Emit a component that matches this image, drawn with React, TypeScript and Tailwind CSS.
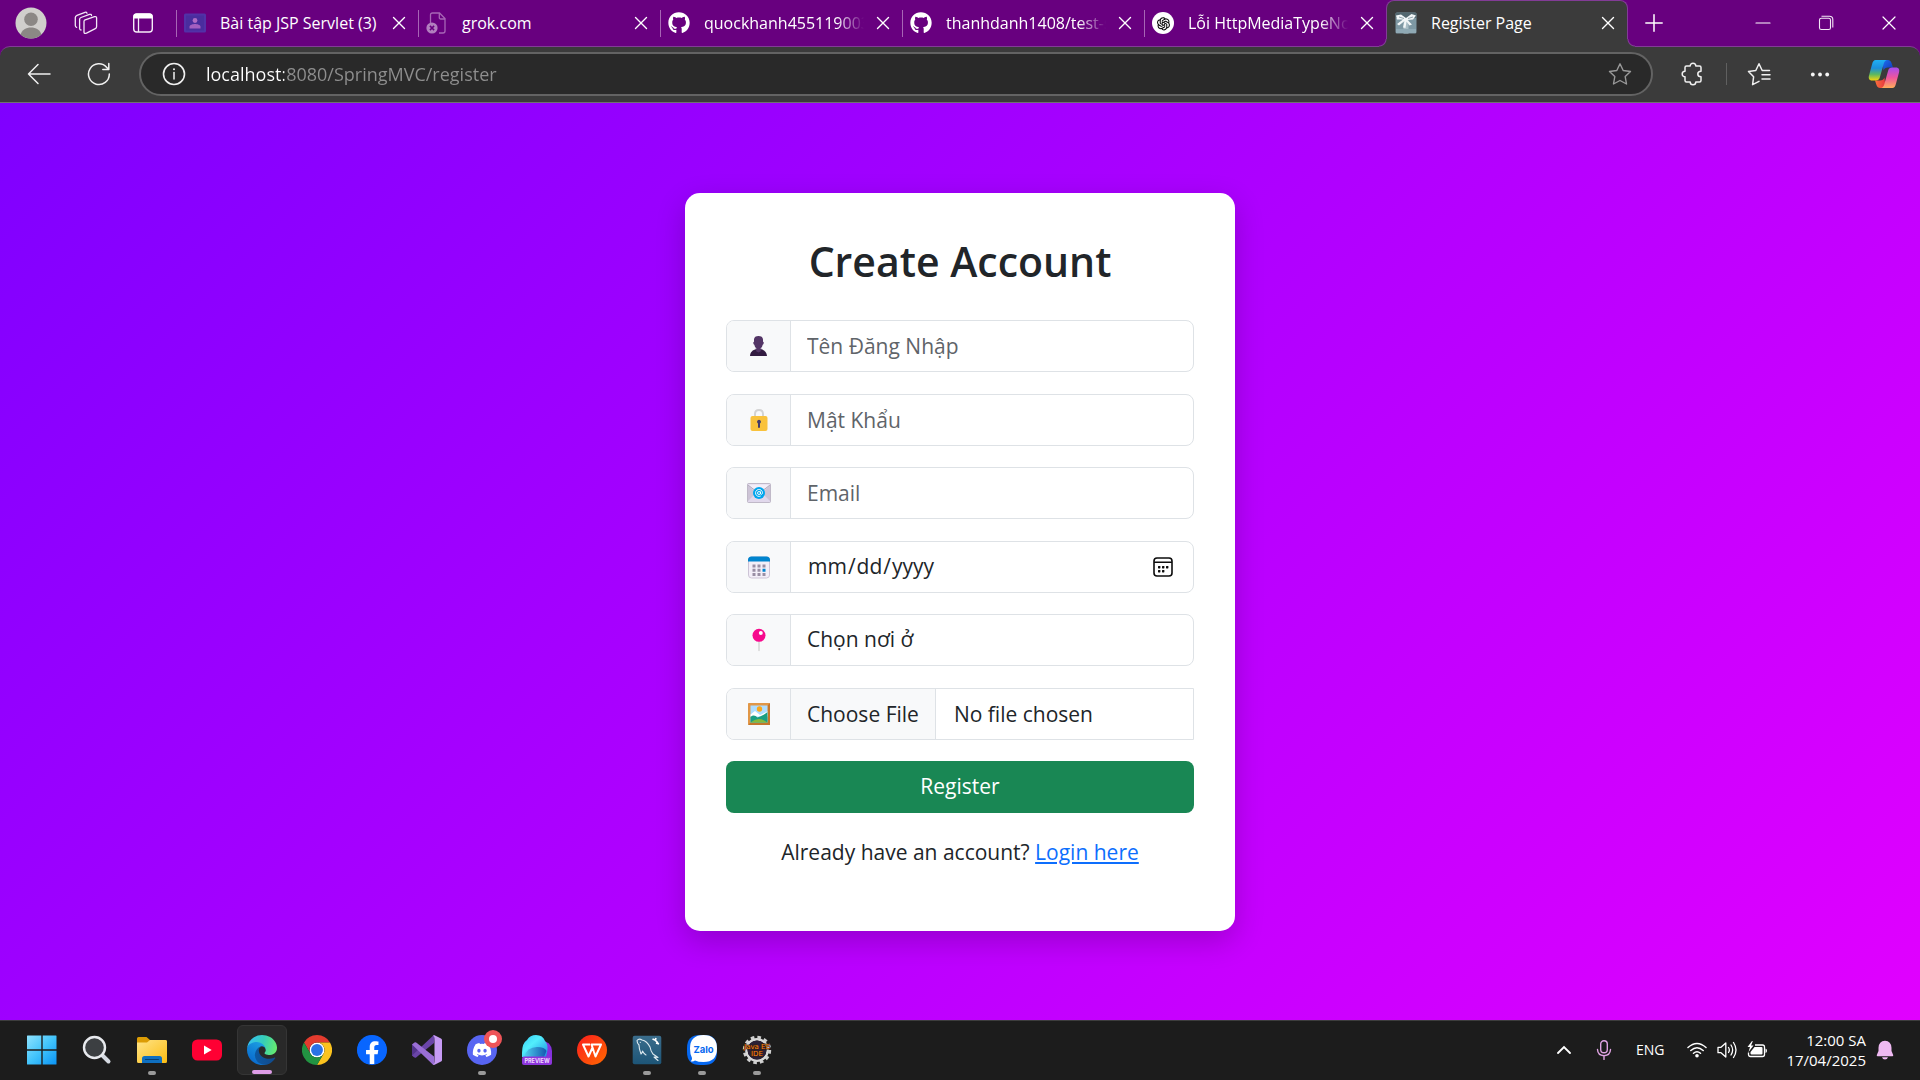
import React from "react";
import { X, Minus, Plus } from "lucide-react";
import { FaGithub, FaDiscord, FaFacebook } from "react-icons/fa";
import { AiOutlineOpenAI } from "react-icons/ai";

/* ---------- browser icons ---------- */

const Avatar = () => (
  <svg viewBox="0 0 32 32" className="size-8" aria-hidden="true">
    <circle cx="16" cy="16" r="15.5" fill="#d0cfcc" />
    <circle cx="16" cy="12.2" r="6.8" fill="#8b8885" />
    <path d="M5.5 27.4C7 23 11 20.4 16 20.4S25 23 26.500 27.400A15.500 15.500 0 0 1 5.500 27.400Z" fill="#8b8885" />
  </svg>
);

const Workspaces = () => (
  <svg viewBox="0 0 24 24" className="size-6" fill="none" stroke="#f3e8f6" strokeWidth="1.3" strokeLinejoin="round" strokeLinecap="round" aria-hidden="true">
    <path d="M10.500 9.200 20.500 5.700Q22.600 5.200 22.600 7V15.500Q22.600 17 21.300 17.600L12.500 22.200Q10 23 10 21V10.500Q10 9.500 10.500 9.200Z" />
    <path d="M17.500 4.500Q17.300 2.900 15.500 3.400L7 6.500Q5.600 7 5.600 8.300V17.500Q5.700 18.900 7 19" />
    <path d="M13 2.200Q12.500.9 11 1.300L3 4.300Q1.300 5 1.300 6.500V14.500Q1.300 16 2.600 16.300" />
  </svg>
);

const TabActions = () => (
  <svg viewBox="0 0 22 22" className="size-[22px]" fill="none" aria-hidden="true">
    <rect x="1.700" y="2" width="18.600" height="18" rx="3" stroke="#f6ecf8" strokeWidth="1.400" />
    <path d="M1.500 4.500Q1.500 1.500 4.500 1.500h13Q20.500 1.500 20.500 4.500V6.500H1.500Z" fill="#fff" />
    <path d="M6.500 6v14" stroke="#f6ecf8" strokeWidth="1.300" />
  </svg>
);

const ClassroomIcon = () => (
  <svg viewBox="0 0 22 20" className="h-5 w-[22px]" aria-hidden="true">
    <rect width="22" height="19" y=".5" rx="1.500" fill="#5231a8" />
    <rect x="2" y="2.500" width="18" height="15" fill="#4a2d9e" />
    <circle cx="11" cy="7.500" r="2.400" fill="#b06bc4" />
    <path d="M5.500 15.500v-1.700c0-2 3.500-2.800 5.500-2.800s5.500.8 5.500 2.800v1.700z" fill="#a45fc0" />
  </svg>
);

const BrokenPageIcon = () => (
  <svg viewBox="0 0 22 22" className="size-[22px]" fill="none" aria-hidden="true">
    <path d="M4.500 11V3Q4.500 1 6.500 1H13.500L19 6.500V19Q19 21 17 21H13M13.300 1V5.500Q13.300 7 14.800 7H19" stroke="#a766b6" strokeWidth="1.300" />
    <circle cx="6" cy="16" r="5.600" fill="#b27fbf" />
    <path d="m3.900 13.900 4.200 4.200m0-4.200-4.200 4.200" stroke="#68007f" strokeWidth="1.500" />
  </svg>
);

const GithubIcon = () => <FaGithub className="size-[22px] text-white" aria-hidden="true" />;

const OpenAiIcon = () => (
  <span className="flex size-[22px] items-center justify-center rounded-full bg-white">
    <AiOutlineOpenAI className="size-[17px] text-black" aria-hidden="true" />
  </span>
);

const GiftIcon = () => (
  <svg viewBox="0 0 22 22" className="size-[22px]" aria-hidden="true">
    <rect x=".5" y=".5" width="21" height="21" rx="1.500" fill="#7e98a3" />
    <path d="M.5 2q0-1.500 1.500-1.500h18q1.500 0 1.500 1.500v4H.5z" fill="#53676f" />
    <path d="M8.500 8h5v13.500h-5z" fill="#a9bec6" />
    <path d="M1 17h20v4H1z" fill="#8fa9b4" />
    <path d="M1 3.500 6 2.500 11 6 16.500 2 21 3.500 18 7.500 12.500 8 17 12.500 14.500 13.500 11.500 9.500 10.500 16 8 15.500 9.500 9 4 13.500 2 12 8 7.500 2 7.500Z" fill="#f2f6f7" />
    <path d="m4 5 5 1.500M18 5l-5 1.500" stroke="#93a5ad" strokeWidth="1" />
  </svg>
);

const BackArrow = () => (
  <svg viewBox="0 0 24 24" className="size-6" fill="none" stroke="#f0f0f0" strokeWidth="1.500" strokeLinecap="round" strokeLinejoin="round" aria-hidden="true">
    <path d="M23 12H1.500M11 2.500 1.500 12l9.500 9.500" />
  </svg>
);

const Reload = () => (
  <svg viewBox="0 0 24 24" className="size-6" fill="none" stroke="#f0f0f0" strokeWidth="1.500" strokeLinecap="round" strokeLinejoin="round" aria-hidden="true">
    <path d="M22.300 12A10.400 10.400 0 1 1 19.800 5.400L21.500 7.300M21.800 1.500V7.500H15.800" />
  </svg>
);

const Info = () => (
  <svg viewBox="0 0 24 24" className="size-6 shrink-0" fill="none" stroke="#f0f0f0" aria-hidden="true">
    <circle cx="12" cy="12" r="10.500" strokeWidth="1.600" />
    <path d="M12 10.500v6.500" strokeWidth="1.500" strokeLinecap="round" />
    <circle cx="12" cy="7.300" r="1" fill="#f0f0f0" stroke="none" />
  </svg>
);

const Star = () => (
  <svg viewBox="0 0 24 24" className="size-6" fill="none" stroke="#9a9a9a" strokeWidth="1.400" strokeLinejoin="round" aria-hidden="true">
    <path d="m12 1.800 3.200 6.700 7.300 1-5.300 5.100 1.300 7.400L12 18.500 5.500 22l1.300-7.400L1.500 9.500l7.300-1z" />
  </svg>
);

const Puzzle = () => (
  <svg viewBox="0 0 24 24" className="size-6" fill="none" stroke="#f0f0f0" strokeWidth="1.500" strokeLinejoin="round" aria-hidden="true">
    <path d="M4 5.500Q4 4 5.500 4H9.200C9.200 2.300 10.300 1.200 12 1.200S14.800 2.300 14.800 4H18.500Q20 4 20 5.500V9.200C18.300 9.200 16.800 10.300 16.800 12S18.300 14.800 20 14.800V18.500Q20 20 18.500 20H14.800C14.800 21.700 13.700 22.800 12 22.800S9.200 21.700 9.200 20H5.500Q4 20 4 18.500V14.800C2.300 14.800 1.200 13.700 1.200 12S2.300 9.200 4 9.200Z" />
  </svg>
);

const Favorites = () => (
  <svg viewBox="0 0 24 24" className="size-6" fill="none" stroke="#f0f0f0" strokeWidth="1.500" strokeLinejoin="round" strokeLinecap="round" aria-hidden="true">
    <path d="M12 19.300 5.600 22.600 6.600 14.800 1.500 9.400 8.800 8.500 12 1.800l3.200 6.700H22.500M15 12.800h8M15 17h8" />
  </svg>
);

const Dots = () => (
  <svg viewBox="0 0 24 24" className="size-6" fill="#f5f5f5" aria-hidden="true">
    <circle cx="4.800" cy="12.500" r="1.900" />
    <circle cx="12" cy="12.500" r="1.900" />
    <circle cx="19.200" cy="12.500" r="1.900" />
  </svg>
);

const Copilot = () => (
  <svg viewBox="0 0 32 30" className="h-[30px] w-8" aria-hidden="true">
    <defs>
      <linearGradient id="cpA" x1="0" y1="0" x2="0" y2="1">
        <stop offset="0" stopColor="#1fb0f5" />
        <stop offset=".4" stopColor="#1c8fdc" />
        <stop offset=".7" stopColor="#5cb861" />
        <stop offset="1" stopColor="#f5d50c" />
      </linearGradient>
      <linearGradient id="cpB" x1="0" y1="0" x2="0" y2="1">
        <stop offset="0" stopColor="#a64cf0" />
        <stop offset=".5" stopColor="#f0569b" />
        <stop offset="1" stopColor="#ffad5a" />
      </linearGradient>
      <linearGradient id="cpC" x1="0" y1="0" x2="1" y2="1">
        <stop offset="0" stopColor="#1d6ff0" />
        <stop offset="1" stopColor="#1236b5" />
      </linearGradient>
      <linearGradient id="cpD" x1="0" y1="0" x2="1" y2="0">
        <stop offset="0" stopColor="#f9713b" />
        <stop offset="1" stopColor="#e8363f" />
      </linearGradient>
    </defs>
    <path d="M14.500 1h5.200c2.300 0 3.300 1.200 4 3.500L25 8.500H20c-2.500 0-3.700 1-4.500 3z" fill="url(#cpC)" />
    <path d="M17.500 29h-5.200c-2.300 0-3.300-1.200-4-3.500L7 21.500H12c2.500 0 3.700-1 4.500-3z" fill="url(#cpD)" />
    <path d="M7.800 1H19c-2 .5-2.800 2-3.500 4.500l-3.700 13c-.7 2.200-1.800 3-4 3H4c-2.800 0-3.800-2.300-3-5L4 5.500C4.700 2.500 5.700 1 7.800 1Z" fill="url(#cpA)" />
    <path d="M24.200 29H13c2-.5 2.800-2 3.500-4.500l3.700-13c.7-2.200 1.800-3 4-3H28c2.800 0 3.800 2.300 3 5L28 24.500c-.7 3-1.700 4.500-3.800 4.500Z" fill="url(#cpB)" />
  </svg>
);

const RestoreIcon = () => (
  <svg viewBox="0 0 16 16" className="size-4" fill="none" stroke="#f3e8f6" strokeWidth="1.100" aria-hidden="true">
    <rect x="1.500" y="3.300" width="11" height="11.200" rx="1.800" />
    <path d="M3.500 1.300H11.500Q14.800 1.300 14.800 4.500V12.500" />
  </svg>
);

/* ---------- form icons ---------- */

const PersonIcon = () => (
  <svg viewBox="0 0 24 24" className="size-6" aria-hidden="true">
    <path d="M3 22c.3-4 2.500-6 6.500-7h4c4 1 6.200 3 6.500 7z" fill="#321b41" />
    <path d="M8.500 14.500h6L13.500 17.500 11.500 18.500 9.500 17.500Z" fill="#533566" />
    <path d="M7 5.500C7 3 9 2 11.500 2S16 3 16 5.500v2.300q1 .3.700 1.500-.3 1.300-1 1.500C15 13.500 13.500 15.500 11.500 15.500S8 13.500 7.300 10.800Q6.500 10.500 6.300 9.300 6 8 7 7.800Z" fill="#533566" />
  </svg>
);

const LockIcon = () => (
  <svg viewBox="0 0 24 24" className="size-6" aria-hidden="true">
    <path d="M8 9V6q0-4 4-4t4 4v3" fill="none" stroke="#d3d3d3" strokeWidth="2" />
    <rect x="3.500" y="8" width="17" height="15" rx="2" fill="#f9c23c" />
    <path d="M12 11.800a2 2 0 0 1 1 3.700V19q0 1-1 1t-1-1V15.500a2 2 0 0 1 1-3.700z" fill="#433b6b" />
  </svg>
);

const MailIcon = () => (
  <svg viewBox="0 0 24 24" className="size-6" aria-hidden="true">
    <rect x=".5" y="2.500" width="23" height="19" rx="1" fill="#e1d8ec" />
    <path d="M1 4v16l8-8zM23 4v16l-8-8z" fill="#cdc4d6" />
    <path d="M1 3.500h22L12 12z" fill="#f3eef8" />
    <path d="m1 4 11 8.500L23 4" fill="none" stroke="#b4acbc" strokeWidth="1" />
    <rect x=".5" y="2.500" width="23" height="19" rx="1" fill="none" stroke="#b4acbc" strokeWidth=".8" />
    <circle cx="12" cy="12" r="6" fill="#00a6ed" />
    <circle cx="12" cy="12" r="1.500" fill="none" stroke="#fff" strokeWidth=".9" />
    <path d="M13.500 10.500v2q.2 1 1.200.8.900-.4.800-1.600A3.500 3.500 0 1 0 13.700 15" fill="none" stroke="#fff" strokeWidth=".9" />
  </svg>
);

const CalendarIcon = () => (
  <svg viewBox="0 0 24 24" className="size-6" aria-hidden="true">
    <rect x="1.500" y="2" width="21" height="21" rx="3" fill="#f3eef8" stroke="#cdc4d6" />
    <path d="M1 6.500V5q0-3.500 3.500-3.500h15Q23 1.500 23 5v1.500z" fill="#0084ce" />
    <g fill="#998ea4">
      <path d="M5.500 9.500h3v3h-3zM10.500 9.500h3v3h-3zM15.500 9.500h3v3h-3zM5.500 13.800h3v3h-3zM10.500 13.800h3v3h-3zM5.500 18h3v3h-3zM10.500 18h3v3h-3zM15.500 18h3v3h-3z" />
    </g>
    <path d="M15.500 13.800h3v3h-3z" fill="#0084ce" />
  </svg>
);

const PinIcon = () => (
  <svg viewBox="0 0 24 24" className="size-6" aria-hidden="true">
    <path d="M12 13v9.500" stroke="#d3d3d3" strokeWidth="1.400" strokeLinecap="round" />
    <circle cx="12" cy="7.300" r="6.500" fill="#f70a8d" />
    <circle cx="13.800" cy="5" r="2" fill="#fff" />
  </svg>
);

const PictureIcon = () => (
  <svg viewBox="0 0 24 24" className="size-6" aria-hidden="true">
    <rect x="1" y="1" width="22" height="22" rx=".8" fill="#e19747" />
    <path d="M23 1v22H1l2.500-2.500h17v-17z" fill="#c3762c" />
    <rect x="3.500" y="3.500" width="17" height="17" fill="#aeddff" />
    <circle cx="12.500" cy="7" r="2.700" fill="#f9a71c" />
    <path d="M3.500 12.500 8 9l5 4 7.500-3.500v5h-17z" fill="#fff" />
    <path d="M3.500 15q3.500-3 7 .5Q15 14.500 20.500 10v10.500h-17z" fill="#1a9f83" />
    <path d="M3.500 20.500q8-7 17 0z" fill="#86b93c" />
  </svg>
);

const PickerIcon = () => (
  <svg viewBox="0 0 20 20" className="pointer-events-none absolute right-5 size-5" fill="none" stroke="#0c0c0c" aria-hidden="true">
    <rect x="1" y="1" width="18" height="18" rx="3" strokeWidth="1.600" />
    <path d="M1 5.200h18" strokeWidth="1.500" />
    <g fill="#0c0c0c" stroke="none">
      <rect x="5" y="9" width="2.400" height="2.400" rx=".6" />
      <rect x="9" y="9" width="2.400" height="2.400" rx=".6" />
      <rect x="13" y="9" width="2.400" height="2.400" rx=".6" />
      <rect x="5" y="13" width="2.400" height="2.400" rx=".6" />
      <rect x="9" y="13" width="2.400" height="2.400" rx=".6" />
    </g>
  </svg>
);

/* ---------- taskbar icons ---------- */

const WindowsLogo = () => (
  <svg viewBox="0 0 30 30" className="size-[30px]" aria-hidden="true">
    <defs>
      <linearGradient id="win" x1="0" y1="0" x2="1" y2="1">
        <stop offset="0" stopColor="#8fe3ff" />
        <stop offset=".5" stopColor="#42c4fb" />
        <stop offset="1" stopColor="#0a93f5" />
      </linearGradient>
    </defs>
    <path d="M0 1Q0 .5.500.5H14.300V14.300H0ZM15.700.5H29Q29.500.5 29.500 1V14.300H15.700ZM0 15.700H14.300V29.500H.5Q0 29.500 0 29ZM15.700 15.700H29.500V29Q29.500 29.500 29 29.500H15.700Z" fill="url(#win)" />
  </svg>
);

const SearchLogo = () => (
  <svg viewBox="0 0 30 30" className="size-[30px]" aria-hidden="true">
    <path d="m19 19 7.500 7.500" stroke="#d5dae2" strokeWidth="4" strokeLinecap="round" />
    <circle cx="12.500" cy="12.500" r="10.500" fill="#3c3f42" stroke="#e8eaee" strokeWidth="2.400" />
  </svg>
);

const FolderLogo = () => (
  <svg viewBox="0 0 30 30" className="size-[30px]" aria-hidden="true">
    <defs>
      <linearGradient id="fold" x1="0" y1="0" x2="1" y2="1">
        <stop offset="0" stopColor="#ffe488" />
        <stop offset="1" stopColor="#fbbc12" />
      </linearGradient>
    </defs>
    <path d="M0 8V3.500Q0 2 1.500 2H9.500L13 5H28Q30 5 30 7V12H0Z" fill="#dc9c05" />
    <path d="M0 7.500H10L13 5H28.500Q30 5 30 6.500V26.500Q30 28 28.500 28H1.500Q0 28 0 26.500Z" fill="url(#fold)" />
    <path d="M5 28V23.500Q5 21 7.500 21h15Q25 21 25 23.500V28Z" fill="#0f6fc0" />
    <path d="M8.500 24.500h13" stroke="#063f73" strokeWidth="1.200" strokeLinecap="round" />
  </svg>
);

const YoutubeLogo = () => (
  <svg viewBox="0 0 30 30" className="size-[30px]" aria-hidden="true">
    <rect y="4.500" width="30" height="21" rx="5.500" fill="#ff0033" />
    <path d="m12 10.500 7.700 4.500-7.700 4.500z" fill="#fff" />
  </svg>
);

const EdgeLogo = () => (
  <svg viewBox="0 0 256 256" className="size-[30px]" aria-hidden="true">
    <defs>
      <linearGradient id="edA" x1="63" y1="178" x2="241" y2="178" gradientUnits="userSpaceOnUse">
        <stop offset="0" stopColor="#0c59a4" />
        <stop offset="1" stopColor="#114a8b" />
      </linearGradient>
      <linearGradient id="edB" x1="140" y1="80" x2="45" y2="230" gradientUnits="userSpaceOnUse">
        <stop offset="0" stopColor="#1b9de2" />
        <stop offset=".5" stopColor="#1283d8" />
        <stop offset="1" stopColor="#0a6cce" />
      </linearGradient>
      <linearGradient id="edC" x1="10" y1="60" x2="250" y2="120" gradientUnits="userSpaceOnUse">
        <stop offset="0" stopColor="#35c1f1" />
        <stop offset=".5" stopColor="#36cdb8" />
        <stop offset="1" stopColor="#66eb6e" />
      </linearGradient>
    </defs>
    <path d="M235.680 192.460a93.730 93.730 0 01-10.540 4.710 101.870 101.870 0 01-35.900 6.460c-47.320 0-88.540-32.550-88.540-74.320A31.480 31.480 0 01117.130 102c-42.800 1.800-53.800 46.400-53.800 72.530 0 73.880 68.090 81.370 82.760 81.370 7.910 0 19.840-2.300 27-4.560l1.310-.44a128.340 128.340 0 0066.600-52.800 4 4 0 00-5.320-5.640z" fill="url(#edA)" />
    <path d="M105.730 241.420a79.200 79.200 0 01-22.740-21.340 80.720 80.720 0 0129.530-120c3.120-1.470 8.450-4.130 15.540-4a32.350 32.350 0 0125.690 13 31.880 31.880 0 016.360 18.660c0-.21 24.460-79.600-80-79.600-43.900 0-80 41.660-80 78.210a130.150 130.150 0 0012.110 56 128 128 0 00156.380 67.110 75.550 75.550 0 01-62.780-8z" fill="url(#edB)" />
    <path d="M152.330 149c-.81 1.050-3.300 2.500-3.300 5.660 0 2.610 1.700 5.120 4.720 7.230 14.380 10 41.490 8.680 41.560 8.680a59.560 59.560 0 0030.270-8.350 61.380 61.380 0 0030.430-52.880c.26-22.410-8-37.310-11.340-43.910C223.480 23.980 177.740.14 128 .14a128 128 0 00-128 126.200c.48-36.540 36.800-66.050 80-66.050 3.500 0 23.460.34 42 10.070 16.340 8.580 24.900 18.940 30.850 29.210 6.180 10.670 7.280 24.150 7.280 29.520s-2.740 13.330-7.800 19.910z" fill="url(#edC)" />
  </svg>
);

const ChromeLogo = () => (
  <svg viewBox="0 0 48 48" className="size-[30px]" aria-hidden="true">
    <circle cx="24" cy="24" r="12" fill="#fff" />
    <path d="M24 12H44.781a23.994 23.994 0 0 0-41.564.003L13.608 30l.009-.002A11.985 11.985 0 0 1 24 12Z" fill="#e33b2e" />
    <path d="M34.391 30.003 24 48A23.994 23.994 0 0 0 44.780 12.003H23.999l-.003.009A11.985 11.985 0 0 1 34.391 30.003Z" fill="#fcc31e" />
    <path d="M13.609 30.003 3.218 12.006A23.994 23.994 0 0 0 24.003 48L34.393 30.003l-.007-.007a11.985 11.985 0 0 1-20.778.007Z" fill="#229342" />
    <circle cx="24" cy="24" r="9.500" fill="#2b72e6" />
  </svg>
);

const FacebookLogo = () => (
  <span className="flex size-[30px] items-center justify-center rounded-full bg-[radial-gradient(circle,#fff_65%,#0866ff_66%)]">
    <FaFacebook className="size-[30px] text-[#0866ff]" aria-hidden="true" />
  </span>
);

const VisualStudioLogo = () => (
  <svg viewBox="0 0 30 30" className="size-[30px]" aria-hidden="true">
    <path d="M0 9.500 4 7.500 6 9.500V20.500L4 22.500 0 20.500Z" fill="#52338b" />
    <path d="M0 20.500 21 .7Q22 0 23 .6L22 8 4 22.500Q3 23 2 22.300Z" fill="#6a45a8" />
    <path d="M0 9.500 2.500 7.500Q3.500 7 4.500 7.800L22 21.500 22.500 29.500Q21.500 30.200 20.500 29.300Z" fill="#9a6fd6" />
    <path d="M21 .5Q22 0 23 .5L29 3.500Q30 4 30 5V25Q30 26 29 26.500L23 29.500Q22 30 21 29.500 22.500 28.500 22.500 27V3Q22.500 1.500 21 .5Z" fill="#c79bf5" />
  </svg>
);

const DiscordLogo = () => (
  <span className="relative flex size-[30px] items-center justify-center rounded-full bg-[#5865f2]">
    <FaDiscord className="size-5 text-white" aria-hidden="true" />
    <span className="absolute -top-[5px] left-[17px] flex size-[18px] items-center justify-center rounded-full bg-[#ee5458]">
      <span className="size-2 rounded-full bg-white" />
    </span>
  </span>
);

const PreviewLogo = () => (
  <svg viewBox="0 0 30 30" className="size-[30px]" aria-hidden="true">
    <defs>
      <linearGradient id="pvA" x1="0" y1="0" x2="1" y2="1">
        <stop offset="0" stopColor="#35c8f5" />
        <stop offset=".4" stopColor="#52eefc" />
        <stop offset="1" stopColor="#1a8fe0" />
      </linearGradient>
      <linearGradient id="pvB" x1="0" y1="0" x2="1" y2="0">
        <stop offset="0" stopColor="#4fd2ee" />
        <stop offset="1" stopColor="#1557b0" />
      </linearGradient>
    </defs>
    <path d="M18 6Q29 5 30 16V24H16Z" fill="#8431dd" />
    <path d="M0 18Q0 8 5 5 8 0 14 0q7 0 9 6 3 3 2.500 9L24 22H0Z" fill="url(#pvA)" />
    <path d="M2 22Q5 12 15 12q8 0 9.500 4L22 22Z" fill="url(#pvB)" />
    <rect y="21.500" width="30" height="8.500" rx="2" fill="#8d36dc" />
    <text x="15" y="27.800" textAnchor="middle" fontSize="5.500" fontWeight="700" fill="#f0dcff" fontFamily="Inter, sans-serif">PREVIEW</text>
  </svg>
);

const WpsLogo = () => (
  <svg viewBox="0 0 30 30" className="size-[30px]" aria-hidden="true">
    <defs>
      <linearGradient id="wps" x1="0" y1="0" x2="1" y2="1">
        <stop offset="0" stopColor="#fb1d1d" />
        <stop offset="1" stopColor="#ff6a00" />
      </linearGradient>
    </defs>
    <circle cx="15" cy="15" r="15" fill="url(#wps)" />
    <path d="M13 9.500H6L11.500 21.500 15.500 12.500 18.500 21.500 24 9.500H14.500L17 17" fill="none" stroke="#fff" strokeWidth="2" strokeLinejoin="round" />
  </svg>
);

const MysqlLogo = () => (
  <svg viewBox="0 0 30 30" className="size-[30px]" aria-hidden="true">
    <defs>
      <linearGradient id="sql" x1="0" y1="0" x2="0" y2="1">
        <stop offset="0" stopColor="#3b6d8c" />
        <stop offset="1" stopColor="#1d5577" />
      </linearGradient>
    </defs>
    <rect x=".7" y=".7" width="28.600" height="28.600" rx="2" fill="url(#sql)" />
    <path d="M5 5.500Q7 3 10 5 15 6 18 12 19 17 21 19L26 22.500 22 22 26 25.500M5 5.500Q5 8 7 10 7 14 9 19 10.500 17.500 10.500 16 12 19 14 20" fill="none" stroke="#dfeaf0" strokeWidth="1.100" strokeLinecap="round" strokeLinejoin="round" />
    <circle cx="8.300" cy="7.300" r=".6" fill="#dfeaf0" />
    <path d="m20.500 4 2.500 1 3 3M24 3l-1 3M27 9l-3-1" stroke="#fff" strokeWidth="1.700" fill="none" />
  </svg>
);

const ZaloLogo = () => (
  <svg viewBox="0 0 30 30" className="size-[30px]" aria-hidden="true">
    <path d="M0 13Q0 0 13 0H17Q30 0 30 13V17Q30 30 17 30H13Q0 30 0 17Z" fill="#0668f0" />
    <path d="M16.500 0Q30 0 30 13.500T16.500 27Q11 27 8 25.500 6 26.800 3.800 26.200 5.200 24.800 5 23 3 19.500 3 13.500 3 0 16.500 0Z" fill="#fff" />
    <text x="16.500" y="17.500" textAnchor="middle" fontSize="9.500" fontWeight="700" fill="#0668f0" fontFamily="Inter, sans-serif">Zalo</text>
  </svg>
);

const JavaLogo = () => (
  <svg viewBox="0 0 30 30" className="size-[30px]" aria-hidden="true">
    <circle cx="15" cy="15" r="12.800" fill="none" stroke="#cfcfcf" strokeWidth="2.800" strokeDasharray="3.600 3.102" />
    <circle cx="15" cy="15" r="10.700" fill="none" stroke="#d8d8d8" strokeWidth="2.400" />
    <circle cx="15" cy="15" r="9.500" fill="#2a2036" />
    <g fill="#ff8a1f" stroke="#3a1c08" strokeWidth="1" paintOrder="stroke" fontSize="7" textAnchor="middle" fontFamily="DejaVu Sans, sans-serif">
      <text x="15" y="14">Java EE</text>
      <text x="15" y="20.500">IDE</text>
    </g>
  </svg>
);

/* ---------- tray icons ---------- */

const TrayMic = () => (
  <svg viewBox="0 0 16 20" className="h-5 w-4" fill="none" stroke="#dfa3e2" strokeWidth="1.400" strokeLinecap="round" aria-hidden="true">
    <rect x="4.700" y=".8" width="6.600" height="12" rx="3.300" />
    <path d="M1.500 9.500Q1.800 15.500 8 15.700 14.200 15.500 14.500 9.500M8 16v3.500" />
  </svg>
);

const TrayWifi = () => (
  <svg viewBox="0 0 20 16" className="h-4 w-5" fill="none" stroke="#fff" strokeWidth="1.500" strokeLinecap="round" aria-hidden="true">
    <path d="M1 5.500Q10-2.500 19 5.500M3.800 8.500Q10 3 16.200 8.500M6.500 11.300Q10 8.200 13.500 11.300" />
    <circle cx="10" cy="13.700" r="1.800" fill="#fff" stroke="none" />
  </svg>
);

const TrayVolume = () => (
  <svg viewBox="0 0 20 18" className="h-[18px] w-5" fill="none" stroke="#fff" strokeWidth="1.300" strokeLinecap="round" strokeLinejoin="round" aria-hidden="true">
    <path d="M1 6.300H4L8.800 2V16L4 11.700H1ZM11.500 6.500Q13.200 9 11.500 11.500M14 4Q17.300 9 14 14M16.500 1.500Q21.500 9 16.500 16.500" />
  </svg>
);

const TrayBattery = () => (
  <svg viewBox="0 0 20 18" className="h-[18px] w-5" fill="none" stroke="#fff" strokeWidth="1.300" aria-hidden="true">
    <path d="M8 4H15.500Q17.500 4 17.500 6V13.500Q17.500 15.500 15.500 15.500H3.500Q1.500 15.500 1.500 13.500V11.500" />
    <path d="M7.500 6H14.500Q15.500 6 15.500 7V12.500Q15.500 13.500 14.500 13.500H4.500Q3.500 13.500 3.500 12.500V11Z" fill="#fff" stroke="none" />
    <path d="M18.500 7.500q1.500.5 1.500 2.200t-1.500 2.200z" fill="#fff" stroke="none" />
    <path d="M5 0 .5 6H3L1.500 11 6.500 4.500H4L5.800.2Z" fill="#fff" stroke="none" />
  </svg>
);

const TrayBell = () => (
  <svg viewBox="0 0 18 20" className="h-5 w-[18px]" fill="#efb9f2" aria-hidden="true">
    <path d="M9 .8q6.200.4 6.500 7V11L17.200 15Q17.500 16.200 16.300 16.300H1.700Q.5 16.200.8 15L2.500 11V7.800Q2.800 1.200 9 .8ZM6 17.300h6Q11.300 19.500 9 19.600 6.700 19.500 6 17.300Z" />
  </svg>
);

/* ---------- page ---------- */

const tabs = [
  { title: "Bài tập JSP Servlet (3)", icon: <ClassroomIcon />, active: false, fade: false },
  { title: "grok.com", icon: <BrokenPageIcon />, active: false, fade: false },
  { title: "quockhanh455119003", icon: <GithubIcon />, active: false, fade: true },
  { title: "thanhdanh1408/test-s", icon: <GithubIcon />, active: false, fade: true },
  { title: "Lỗi HttpMediaTypeNo", icon: <OpenAiIcon />, active: false, fade: true },
  { title: "Register Page", icon: <GiftIcon />, active: true, fade: false },
];

const apps = [
  { name: "Start", icon: <WindowsLogo />, state: "" },
  { name: "Search", icon: <SearchLogo />, state: "" },
  { name: "File Explorer", icon: <FolderLogo />, state: "open" },
  { name: "YouTube", icon: <YoutubeLogo />, state: "" },
  { name: "Microsoft Edge", icon: <EdgeLogo />, state: "active" },
  { name: "Google Chrome", icon: <ChromeLogo />, state: "" },
  { name: "Facebook", icon: <FacebookLogo />, state: "" },
  { name: "Visual Studio", icon: <VisualStudioLogo />, state: "" },
  { name: "Discord", icon: <DiscordLogo />, state: "open" },
  { name: "Preview app", icon: <PreviewLogo />, state: "" },
  { name: "WPS Office", icon: <WpsLogo />, state: "" },
  { name: "MySQL Workbench", icon: <MysqlLogo />, state: "open" },
  { name: "Zalo", icon: <ZaloLogo />, state: "open" },
  { name: "Eclipse Java EE IDE", icon: <JavaLogo />, state: "open" },
];

function TabStrip() {
  return (
    <header className="flex h-[46px] bg-[#68007f] text-white">
      <div className="flex w-[176px] shrink-0 items-center pl-[15px]">
        <button aria-label="Profile"><Avatar /></button>
        <button aria-label="Workspaces" className="ml-[27px]"><Workspaces /></button>
        <button aria-label="Tab actions" className="ml-[34px]"><TabActions /></button>
      </div>
      <nav aria-label="Tabs" className="flex min-w-0">
        {tabs.map((t) => (
          <div
            key={t.title}
            className={
              t.active
                ? "relative z-10 flex h-[47px] w-[242px] items-center rounded-t-lg border border-b-0 border-[#823c96] bg-[#3b3b3b] pr-2 pb-0.5 pl-2"
                : "relative flex w-[242px] items-center pr-2 pl-2 before:absolute before:left-0 before:h-[27px] before:w-px before:bg-[#a765b5]"
            }
          >
            {t.active && (
              <>
                <span className="absolute bottom-0 -left-2 size-2 bg-[radial-gradient(circle_at_0_0,#68007f_6px,#823c96_7px,#3b3b3b_8px)]" />
                <span className="absolute -right-2 bottom-0 size-2 bg-[radial-gradient(circle_at_100%_0,#68007f_6px,#823c96_7px,#3b3b3b_8px)]" />
              </>
            )}
            <button className="flex min-w-0 flex-1 items-center gap-[14px] text-left">
              <span className="flex w-[22px] shrink-0 justify-center">{t.icon}</span>
              <span
                className={
                  t.fade
                    ? "flex-1 overflow-hidden text-base leading-6 whitespace-nowrap [mask-image:linear-gradient(90deg,#000_calc(100%-28px),transparent)]"
                    : "flex-1 text-base leading-6 whitespace-nowrap"
                }
              >
                {t.title}
              </span>
            </button>
            <button aria-label="Close tab" className="ml-2">
              <X className="size-[22px]" strokeWidth={1.5} />
            </button>
          </div>
        ))}
      </nav>
      <button aria-label="New tab" className="ml-2 self-center p-1">
        <Plus className="size-7" strokeWidth={1.3} />
      </button>
      <div className="ml-auto flex items-center gap-[39px] pr-[19px]">
        <button aria-label="Minimize"><Minus className="size-6" strokeWidth={1.2} /></button>
        <button aria-label="Restore" className="flex w-6 justify-center"><RestoreIcon /></button>
        <button aria-label="Close window"><X className="size-6" strokeWidth={1.2} /></button>
      </div>
    </header>
  );
}

function Toolbar() {
  return (
    <div className="bg-[#68007f]">
      <div className="flex h-[57px] items-center rounded-t-[10px] border-t border-b border-t-[#823c96] border-b-[#707070] bg-[#3b3b3b] pr-5 pb-0.5 pl-[27px]">
        <button aria-label="Back"><BackArrow /></button>
        <button aria-label="Reload" className="ml-9"><Reload /></button>
        <div className="ml-7 flex h-11 flex-1 items-center rounded-full border-2 border-[#636363] bg-[#292929] pr-[19px] pl-[21px]">
          <Info />
          <input
            type="text"
            aria-label="Address"
            defaultValue="localhost:8080/SpringMVC/register"
            className="ml-5 min-w-0 flex-1 bg-[linear-gradient(90deg,#fff_78px,#8f8f8f_78px)] bg-clip-text text-lg leading-7 text-transparent outline-none"
          />
          <button aria-label="Add to favorites"><Star /></button>
        </div>
        <button aria-label="Extensions" className="ml-7"><Puzzle /></button>
        <span className="ml-[21px] h-[22px] w-px bg-[#606060]" />
        <button aria-label="Favorites" className="ml-5"><Favorites /></button>
        <button aria-label="Settings and more" className="ml-[37px]"><Dots /></button>
        <button aria-label="Copilot" className="ml-9"><Copilot /></button>
      </div>
    </div>
  );
}

const control = "h-full w-full min-w-0 bg-transparent px-4 text-[21px] text-[#212529] outline-none placeholder:text-[#5f6469]";

function Field({ id, label, icon, square, children }: { id: string; label: string; icon: React.ReactNode; square?: boolean; children: React.ReactNode }) {
  return (
    <div className={square ? "flex h-[52px] overflow-hidden rounded-l-lg border border-[#dee2e6]" : "flex h-[52px] overflow-hidden rounded-lg border border-[#dee2e6]"}>
      <label htmlFor={id} aria-label={label} className="flex w-16 shrink-0 items-center justify-center border-r border-[#dee2e6] bg-[#f8f9fa]">
        {icon}
      </label>
      <div className="relative flex min-w-0 flex-1 items-center">{children}</div>
    </div>
  );
}

function RegisterCard() {
  return (
    <section className="w-full max-w-[550px] rounded-[15px] bg-white p-[41px] text-[#212529] shadow-[0_10px_30px_rgba(0,0,0,0.2)]">
      <h1 className="mb-8 text-center text-[41px] leading-[54px] font-semibold">Create Account</h1>
      <form className="flex min-h-[493px] flex-col justify-between" onSubmit={(e) => e.preventDefault()}>
        <Field id="username" label="Tên Đăng Nhập" icon={<PersonIcon />}>
          <input id="username" type="text" placeholder="Tên Đăng Nhập" className={control} />
        </Field>
        <Field id="password" label="Mật Khẩu" icon={<LockIcon />}>
          <input id="password" type="password" placeholder="Mật Khẩu" className={control} />
        </Field>
        <Field id="email" label="Email" icon={<MailIcon />}>
          <input id="email" type="email" placeholder="Email" className={control} />
        </Field>
        <Field id="birthday" label="Date of birth" icon={<CalendarIcon />}>
          <input id="birthday" type="date" className={control + " [&::-webkit-calendar-picker-indicator]:opacity-0"} />
          <PickerIcon />
        </Field>
        <Field id="place" label="Chọn nơi ở" icon={<PinIcon />}>
          <select id="place" className={control + " appearance-none"}>
            <option>Chọn nơi ở</option>
          </select>
        </Field>
        <Field id="photo" label="Choose File" icon={<PictureIcon />} square>
          <input
            id="photo"
            type="file"
            className="h-full w-full text-[21px] leading-[50px] text-[#212529] file:mr-[18px] file:h-full file:border-0 file:border-r file:border-solid file:border-[#dee2e6] file:bg-[#f8f9fa] file:px-4 file:text-[#212529]"
          />
        </Field>
        <button type="submit" className="h-[52px] rounded-lg bg-[#198754] text-[21px] text-white">Register</button>
      </form>
      <p className="mt-[22px] mb-[21px] text-center text-[21px] leading-[34px]">
        Already have an account? <a href="#login" className="text-[#0d6efd] underline">Login here</a>
      </p>
    </section>
  );
}

function Taskbar() {
  return (
    <footer className="flex h-[60px] items-center border-t border-[#3d3d3d] bg-[#1c1c1c] pr-[26px] pb-0.5 pl-[14px] text-white">
      <div className="flex">
        {apps.map((a) => (
          <button key={a.name} aria-label={a.name} className="flex w-[55px] justify-center">
            <span
              className={
                a.state === "active"
                  ? "relative flex size-[50px] items-center justify-center rounded-md border border-[#353535] bg-[#292929]"
                  : "relative flex size-[50px] items-center justify-center"
              }
            >
              {a.icon}
              {a.state === "active" && <span className="absolute bottom-0 h-1 w-5 rounded-full bg-[#dd9ce6]" />}
              {a.state === "open" && <span className="absolute bottom-0 h-1 w-2 rounded-full bg-[#9a9a9a]" />}
            </span>
          </button>
        ))}
      </div>
      <div className="ml-auto flex items-center">
        <button aria-label="Show hidden icons">
          <svg viewBox="0 0 14 14" className="size-[14px]" fill="none" stroke="#fff" strokeWidth="1.800" strokeLinecap="round" aria-hidden="true">
            <path d="m1 10 6-6 6 6" />
          </svg>
        </button>
        <button aria-label="Microphone" className="ml-[25px]"><TrayMic /></button>
        <button className="ml-6 text-sm">ENG</button>
        <button aria-label="Network, sound and battery" className="ml-[23px] flex items-center gap-[10px]">
          <TrayWifi />
          <TrayVolume />
          <TrayBattery />
        </button>
        <button className="ml-[19px] text-right text-[15px] leading-5">
          <span className="block">12:00 SA</span>
          <span className="block">17/04/2025</span>
        </button>
        <button aria-label="Notifications" className="ml-[10px]"><TrayBell /></button>
      </div>
    </footer>
  );
}

export default function App() {
  return (
    <div className="flex min-h-screen flex-col font-['Open_Sans','Noto_Sans',sans-serif]">
      <TabStrip />
      <Toolbar />
      <main className="flex flex-1 items-center justify-center bg-[linear-gradient(135deg,#7f00ff,#e100ff)] pt-px">
        <RegisterCard />
      </main>
      <Taskbar />
    </div>
  );
}
